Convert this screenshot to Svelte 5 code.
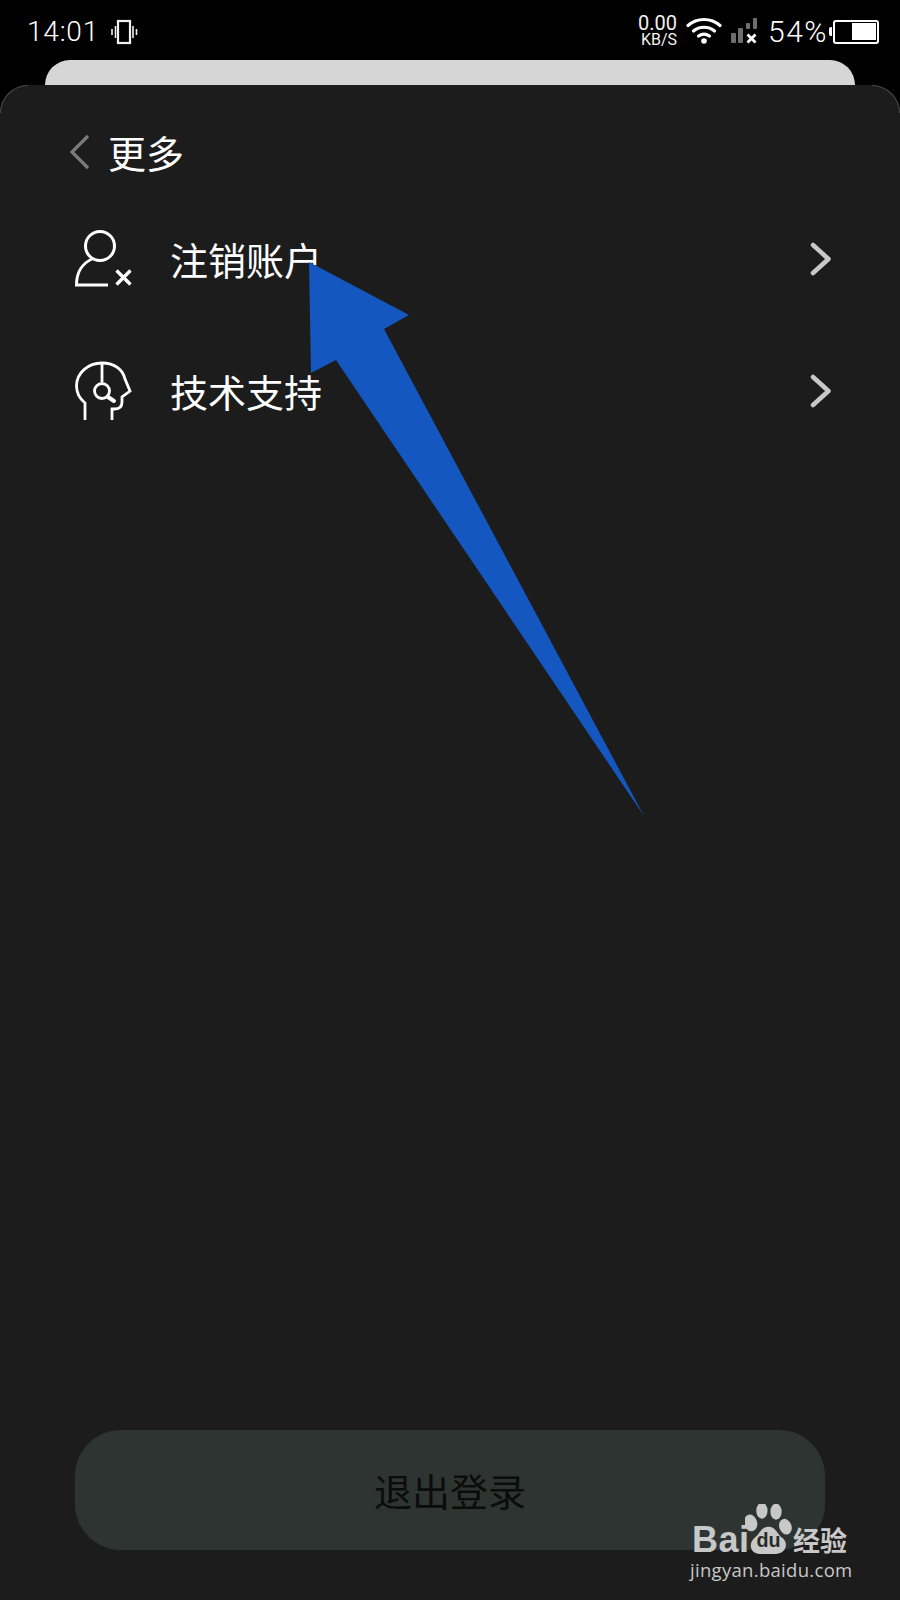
<script>
  const rows = [
    { id: 'cancel', label: '注销账户' },
    { id: 'support', label: '技术支持' }
  ];
</script>

<div class="page">
  <header class="status">
    <div class="status-left">
      <span class="time">14:01</span>
      <svg class="vibrate" width="29" height="26" viewBox="0 0 29 26" fill="none" stroke="#f2f2f2">
        <rect x="8" y="2" width="12" height="22" stroke-width="2.200" />
        <path d="M5.500 7v12M2 10v6M23 7v12M26.500 10v6" stroke-width="1.600" />
      </svg>
    </div>
    <div class="status-right">
      <div class="speed"><span class="sp1">0.00</span><span class="sp2">KB/S</span></div>
      <svg class="wifi" width="36" height="28" viewBox="0 0 36 28" fill="none" stroke="#fff" stroke-width="3.200" stroke-linecap="round">
        <path d="M2 9.500C11 1.500 25 1.500 34 9.500" />
        <path d="M7.500 15C13.500 10 22.500 10 28.500 15" />
        <path d="M12.500 20C16 17.500 20 17.500 23.500 20" />
        <circle cx="18" cy="25" r="2.800" fill="#fff" stroke="none" />
      </svg>
      <svg class="signal" width="26" height="26" viewBox="0 0 26 26">
        <rect x="0" y="15" width="5" height="10" rx="1" fill="#6e6e6e" />
        <rect x="7" y="10" width="5" height="15" rx="1" fill="#6e6e6e" />
        <rect x="15" y="5" width="4" height="6" rx="1" fill="#6e6e6e" />
        <rect x="22" y="0" width="4" height="11" rx="1" fill="#6e6e6e" />
        <path d="M16.500 16.500l8 8M24.500 16.500l-8 8" stroke="#fff" stroke-width="2.800" />
      </svg>
      <span class="pct">54%</span>
      <div class="battery"><span class="cap"></span><span class="level"></span></div>
    </div>
  </header>

  <div class="back-sheet"></div>

  <main class="panel">
    <div class="title-row">
      <svg width="22" height="36" viewBox="0 0 22 36" fill="none" stroke="#7b7b7b" stroke-width="3.200">
        <path d="M19 2L3 18l16 16" />
      </svg>
      <h1>更多</h1>
    </div>

    <ul class="list">
      {#each rows as row}
        <li class="row">
          {#if row.id === 'cancel'}
            <svg class="icon" width="60" height="60" viewBox="0 0 60 60" fill="none" stroke="#fff" stroke-width="3">
              <circle cx="25" cy="17" r="14.500" />
              <path d="M17 30C8 34 1.500 43 1.500 56H33" />
              <path d="M41.500 41.500l14 14M55.500 41.500l-14 14" stroke-width="3.400" />
            </svg>
          {:else}
            <svg class="icon" width="60" height="60" viewBox="0 0 60 60" fill="none" stroke="#fff" stroke-width="2.800">
              <path d="M10 59V42C4 37 1.500 31 1.500 25C1.500 12 13 2 27 2C40 2 48 9 50 18L55 30L47 36V41C47 46 44 48 40 48H37V59" />
              <path d="M27 2V21" />
              <circle cx="27" cy="30" r="7.500" />
              <path d="M33 36l6 4" stroke-width="4" stroke-linecap="round" />
            </svg>
          {/if}
          <span class="label">{row.label}</span>
          <svg class="chev" width="22" height="34" viewBox="0 0 22 34" fill="none" stroke="#c8c8c8" stroke-width="4.500" stroke-linecap="round" stroke-linejoin="round">
            <path d="M3 3l15.500 14L3 31" />
          </svg>
        </li>
      {/each}
    </ul>

    <button class="logout">退出登录</button>
  </main>

  <svg class="arrow" width="900" height="1600" viewBox="0 0 900 1600">
    <path d="M309 262L409 315L384 329L644 816L336 360L311 373Z" fill="#1557c0" />
  </svg>

  <div class="mark">
    <div class="mark-top">
      <span class="bai">Bai</span>
      <svg width="47" height="51" viewBox="0 0 50 54">
        <g fill="#c8c8c8">
          <ellipse cx="6" cy="20" rx="7" ry="9" transform="rotate(-15 6 20)" />
          <ellipse cx="18" cy="7" rx="6" ry="8.500" />
          <ellipse cx="33" cy="8" rx="6" ry="8.500" />
          <ellipse cx="43" cy="24" rx="6.500" ry="8.500" transform="rotate(-20 43 24)" />
          <path d="M25 24C33 24 34 32 40 36C47 42 43 53 33 53H16C6 53 3 42 10 36C16 32 17 24 25 24Z" />
        </g>
        <text x="25" y="46" text-anchor="middle" class="du">du</text>
      </svg>
      <span class="jy">经验</span>
    </div>
    <div class="url">jingyan.baidu.com</div>
  </div>
</div>

<style>
  :global(body) {
    margin: 0;
    background: #000;
  }
  .page {
    position: relative;
    width: 900px;
    height: 1600px;
    overflow: hidden;
    background: #000;
    font-family: "Noto Sans CJK SC", "Noto Sans", sans-serif;
    display: flex;
    flex-direction: column;
  }
  .status {
    height: 60px;
    flex: none;
    display: flex;
    justify-content: space-between;
    align-items: center;
    padding: 3px 21px 0 27px;
    color: #fff;
    box-sizing: border-box;
  }
  .status-left,
  .status-right {
    display: flex;
    align-items: center;
  }
  .time {
    font: 300 28px/1 Roboto, sans-serif;
    letter-spacing: 0.800px;
  }
  .vibrate {
    margin-left: 11px;
  }
  .speed {
    display: flex;
    flex-direction: column;
    align-items: flex-end;
    font-family: Roboto, sans-serif;
    color: #f0f0f0;
    margin-top: -2px;
  }
  .sp1 {
    font-size: 20px;
    line-height: 18px;
  }
  .sp2 {
    font-size: 16px;
    line-height: 15px;
  }
  .wifi {
    margin-left: 9px;
    margin-top: -4px;
  }
  .signal {
    margin-left: 9px;
    margin-top: -2px;
  }
  .pct {
    font: 300 30px/1 Roboto, sans-serif;
    letter-spacing: 1.500px;
    margin-left: 11px;
  }
  .battery {
    position: relative;
    box-sizing: border-box;
    width: 46px;
    height: 24px;
    margin-left: 5px;
    border: 2.500px solid #fff;
    border-radius: 3px;
    display: flex;
    justify-content: flex-end;
    padding: 1.500px;
  }
  .level {
    width: 24px;
    background: #fff;
  }
  .cap {
    position: absolute;
    left: -6px;
    top: 5px;
    width: 3px;
    height: 9px;
    background: #fff;
    border-radius: 2px 0 0 2px;
  }
  .back-sheet {
    flex: none;
    height: 25px;
    margin: 0 45px;
    background: #d6d6d6;
    border-radius: 26px 26px 0 0;
  }
  .panel {
    position: relative;
    flex: 1;
    display: flex;
    flex-direction: column;
    background: #1c1c1c;
    border-radius: 28px 28px 0 0;
  }
  .panel::before,
  .panel::after {
    content: "";
    position: absolute;
    top: 0;
    width: 28px;
    height: 28px;
    box-sizing: border-box;
    border-top: 1px solid #4a4a4a;
  }
  .panel::before {
    left: 0;
    border-left: 1px solid #4a4a4a;
    border-top-left-radius: 28px;
  }
  .panel::after {
    right: 0;
    border-right: 1px solid #4a4a4a;
    border-top-right-radius: 28px;
  }
  .title-row {
    display: flex;
    align-items: center;
    height: 44px;
    margin-top: 45px;
    padding-left: 69px;
    gap: 17px;
  }
  h1 {
    margin: 0;
    color: #fff;
    font-size: 38px;
    font-weight: 400;
    line-height: 44px;
  }
  .list {
    list-style: none;
    margin: 55px 0 0;
    padding: 0 0 0 75px;
    display: flex;
    flex-direction: column;
    gap: 72px;
  }
  .row {
    display: flex;
    align-items: center;
    height: 60px;
    color: #fff;
  }
  .icon {
    flex: none;
  }
  .label {
    margin-left: 35px;
    font-size: 38px;
    line-height: 60px;
    flex: 1;
  }
  .chev {
    flex: none;
    margin-right: 68px;
  }
  .logout {
    display: block;
    margin: auto 75px 50px;
    height: 120px;
    background: #2e3431;
    border: 0;
    border-radius: 46px;
    color: #0c0c0c;
    font: 400 38px/1 "Noto Sans CJK SC", sans-serif;
    padding: 0;
  }
  .arrow {
    position: absolute;
    left: 0;
    top: 0;
    pointer-events: none;
  }
  .mark {
    position: absolute;
    left: 690px;
    top: 1503px;
    width: 170px;
    color: #c8c8c8;
  }
  .mark-top {
    display: flex;
    align-items: flex-end;
    height: 52px;
  }
  .bai {
    font: 700 36px/36px "Liberation Sans", sans-serif;
    letter-spacing: 0.500px;
    margin-left: 2px;
    width: 54px;
    margin-bottom: -3px;
  }
  .mark-top svg {
    margin-left: -1px;
    flex: none;
  }
  .du {
    font: 700 21px "Liberation Sans", sans-serif;
    fill: #2a2a2a;
  }
  .jy {
    font-size: 27px;
    font-weight: 700;
    line-height: 30px;
    margin-left: 1px;
    white-space: nowrap;
  }
  .url {
    font: 400 18.500px/22px "Open Sans", sans-serif;
    letter-spacing: 0.300px;
    margin-top: 4px;
    white-space: nowrap;
  }
</style>
